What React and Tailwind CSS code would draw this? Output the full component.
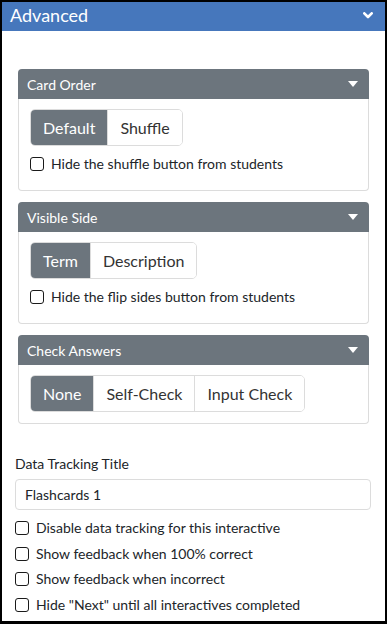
import React from "react";

function Caret() {
  return (
    <svg width="10" height="6" viewBox="0 0 10 6" className="shrink-0">
      <path d="M0 0 L10 0 L5 6 Z" fill="#ffffff" />
    </svg>
  );
}

function Check({ label, className = "" }) {
  return (
    <div className={"flex items-center gap-[7px] " + className}>
      <span className="w-[14px] h-[14px] border-[1.5px] border-[#1a1a1a] rounded-[3px] bg-white shrink-0" />
      <span className="text-[14px] leading-[18px] text-[#212529]">{label}</span>
    </div>
  );
}

function Group({ items }) {
  return (
    <div className="flex self-start border border-[#dcdcdc] rounded-[5px] overflow-hidden h-[37px]">
      {items.map((it, i) => (
        <div
          key={it}
          className={
            "flex items-center px-3 text-[16px] " +
            (i === 0
              ? "bg-[#6c757d] text-white"
              : "bg-white text-[#333] border-l border-[#dcdcdc]")
          }
        >
          {it}
        </div>
      ))}
    </div>
  );
}

function Panel({ title, items, check }) {
  return (
    <div className="flex flex-col">
      <div className="h-[30px] bg-[#6c757d] rounded-t-[4px] flex items-center justify-between pl-[9px] pr-[11px]">
        <span className="text-white text-[14px]">{title}</span>
        <Caret />
      </div>
      <div
        className={
          "flex flex-col border-x border-b border-[#dcdcdc] rounded-b-[4px] px-[11px] pt-[10px] " +
          (check ? "pb-[17px]" : "pb-[11px]")
        }
      >
        <Group items={items} />
        {check && <Check label={check} className="mt-[9px]" />}
      </div>
    </div>
  );
}

export default function App() {
  return (
    <div
      className="w-[387px] h-[624px] border-2 border-b-[3px] border-black bg-white flex flex-col overflow-hidden"
      style={{ fontFamily: "Lato, 'Noto Sans', sans-serif" }}
    >
      <div className="h-[29px] bg-[#4677bc] flex items-center justify-between pl-[8px] pr-[12px] pb-[3px] shrink-0">
        <span className="text-white text-[18px] leading-[22px]">Advanced</span>
        <svg width="10" height="7" viewBox="0 0 10 7">
          <polyline points="1.3,1.3 5,5 8.7,1.3" fill="none" stroke="#ffffff" strokeWidth="2.6" strokeLinecap="round" strokeLinejoin="round" />
        </svg>
      </div>
      <div className="flex flex-col gap-[11px] px-[16px] pt-[38px]">
        <Panel title="Card Order" items={["Default", "Shuffle"]} check="Hide the shuffle button from students" />
        <Panel title="Visible Side" items={["Term", "Description"]} check="Hide the flip sides button from students" />
        <Panel title="Check Answers" items={["None", "Self-Check", "Input Check"]} />
      </div>
      <div className="flex flex-col px-[13px] pr-[14px] pt-[31px]">
        <div className="text-[14px] leading-[18px] text-[#212529]">Data Tracking Title</div>
        <div className="mt-[6px] h-[31px] border border-[#dcdcdc] rounded-[4px] flex items-center px-[9px] text-[14px] text-[#212529]">
          Flashcards 1
        </div>
        <div className="flex flex-col gap-[7.7px] mt-[9px]">
          <Check label="Disable data tracking for this interactive" />
          <Check label="Show feedback when 100% correct" />
          <Check label="Show feedback when incorrect" />
          <Check label={'Hide "Next" until all interactives completed'} />
        </div>
      </div>
    </div>
  );
}
